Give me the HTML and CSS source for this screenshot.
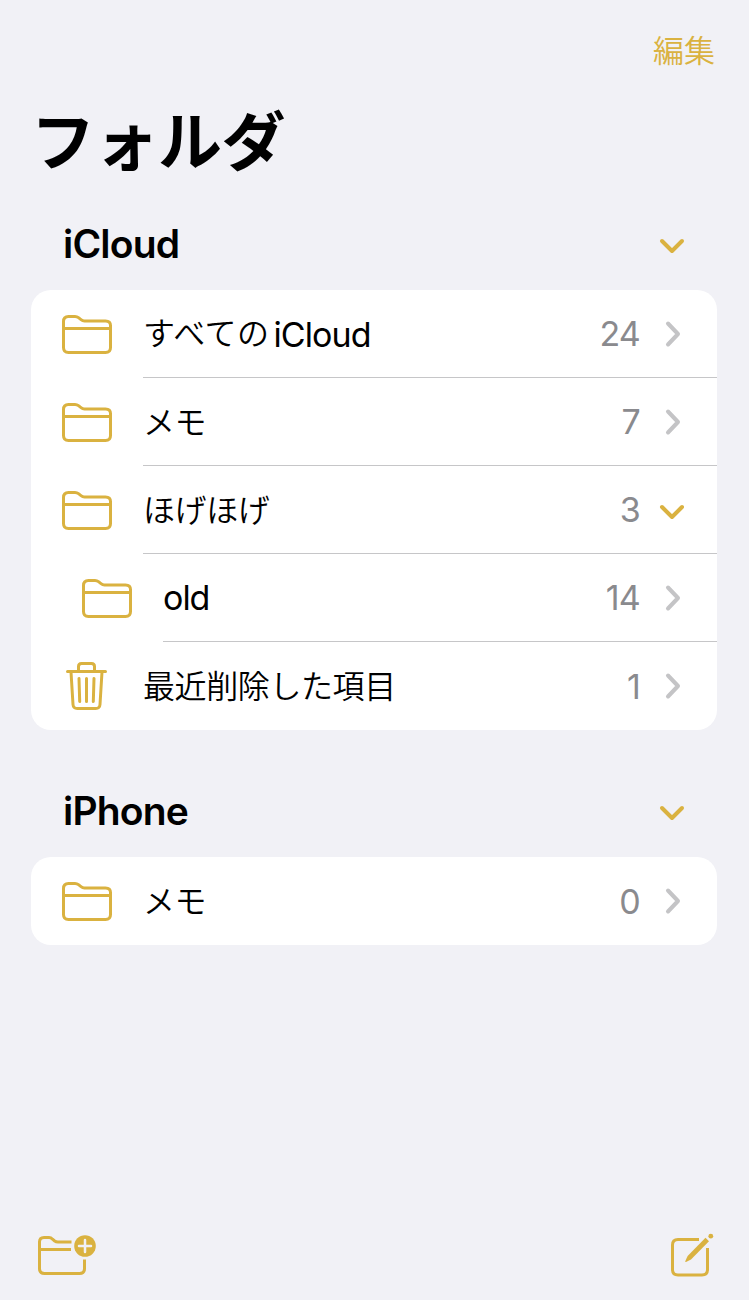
FILE: index.html
```html
<!DOCTYPE html>
<html lang="ja">
<head>
    <meta charset="UTF-8">
    <title>フォルダ</title>
    <link rel="stylesheet" href="styles.css">
</head>
<body>
    <svg class="defs" width="0" height="0">
        <symbol id="folder" viewBox="0 0 52 42">
            <path d="M2.5 34.5V8.5Q2.5 3.5 7.5 3.5H14Q16 3.5 17.5 4.7L20 6.7Q21.5 7.9 23.5 7.9H44.5Q49.5 7.9 49.5 12.4V34.5Q49.5 39.5 44.5 39.5H7.5Q2.5 39.5 2.5 34.5ZM2.5 15.5H49.5"/>
        </symbol>
        <symbol id="trash" viewBox="0 0 44 50">
            <path d="M2.5 10.5H40.5M13.5 10V5.5Q13.5 2.5 16.5 2.5H26.5Q29.5 2.5 29.5 5.5V10M6 11L8 43.5Q8.3 47.5 12.3 47.5H30.7Q34.7 47.5 35 43.5L37 11M14 17.5L14.7 40.5M21.5 17.5V40.5M29 17.5L28.3 40.5"/>
        </symbol>
        <symbol id="right" viewBox="0 0 18 28">
            <path d="M3 3.5L13 14L3 24.5"/>
        </symbol>
        <symbol id="down" viewBox="0 0 28 18">
            <path d="M4 5L14 15L24 5"/>
        </symbol>
    </svg>

    <div class="nav">
        <a class="edit">編集</a>
    </div>
    <h1>フォルダ</h1>

    <div class="section-title">
        <h2>iCloud</h2>
        <svg class="down"><use href="#down"/></svg>
    </div>
    <div class="list">
        <div class="row">
            <svg class="folder"><use href="#folder"/></svg>
            <div class="content">
                <span class="name all">すべての<span class="latin cloud">iCloud</span></span>
                <span class="count">24</span>
                <svg class="right"><use href="#right"/></svg>
            </div>
        </div>
        <div class="row">
            <svg class="folder"><use href="#folder"/></svg>
            <div class="content">
                <span class="name">メモ</span>
                <span class="count">7</span>
                <svg class="right"><use href="#right"/></svg>
            </div>
        </div>
        <div class="row">
            <svg class="folder"><use href="#folder"/></svg>
            <div class="content">
                <span class="name">ほげほげ</span>
                <span class="count">3</span>
                <svg class="down"><use href="#down"/></svg>
            </div>
        </div>
        <div class="row child">
            <svg class="folder"><use href="#folder"/></svg>
            <div class="content">
                <span class="name latin">old</span>
                <span class="count">14</span>
                <svg class="right"><use href="#right"/></svg>
            </div>
        </div>
        <div class="row">
            <svg class="trash"><use href="#trash"/></svg>
            <div class="content">
                <span class="name">最近削除した項目</span>
                <span class="count">1</span>
                <svg class="right"><use href="#right"/></svg>
            </div>
        </div>
    </div>

    <div class="section-title">
        <h2>iPhone</h2>
        <svg class="down"><use href="#down"/></svg>
    </div>
    <div class="list">
        <div class="row">
            <svg class="folder"><use href="#folder"/></svg>
            <div class="content">
                <span class="name">メモ</span>
                <span class="count">0</span>
                <svg class="right"><use href="#right"/></svg>
            </div>
        </div>
    </div>

    <div class="toolbar">
        <svg class="new-folder" viewBox="0 0 62 44">
            <path class="butt" d="M35.5 9H22Q20 9 18.7 8L16.5 6.2Q15 4.5 13 4.5H8Q3.500 4.500 3.500 9V35.500Q3.500 40.500 8.500 40.500H43.500Q48.500 40.500 48.500 35.500V26.500M3.500 16.500H35"/>
            <circle cx="49" cy="13" r="10.8"/>
            <path class="plus" d="M49 7V19M43 13H55"/>
        </svg>
        <svg class="compose" viewBox="0 0 46 46">
            <path class="butt" d="M30 6.500H9Q3.500 6.500 3.500 12V36.500Q3.500 42 9 42H33Q38.500 42 38.500 36.500V15"/>
            <path class="fill" d="M36.500 4.700L40 8.200L22 26.600L17 29Q16 29.300 16.300 28.300L18.600 23Z"/>
            <circle cx="41.800" cy="3.200" r="2.400"/>
        </svg>
    </div>
</body>
</html>
```
FILE: styles.css
```css
* {
    box-sizing: border-box;
}
body {
    background: #f1f1f6;
    font-family: 'Inter', 'Noto Sans CJK JP', sans-serif;
    display: flex;
    flex-direction: column;
    height: 1300px;
    margin: 0;
    padding: 0 32px 0 31px;
    color: #000;
    overflow: hidden;
}
svg {
    display: block;
    flex: none;
    fill: none;
    stroke: #dab240;
    stroke-width: 3;
    stroke-linecap: round;
    stroke-linejoin: round;
}
.defs {
    position: absolute;
}
.nav {
    display: flex;
    justify-content: flex-end;
    height: 95px;
    padding: 26px 2px 0 0;
}
.edit {
    color: #dab240;
    font-family: 'Noto Sans CJK JP', sans-serif;
    font-weight: 350;
    font-size: 31px;
    line-height: 46px;
}
h1 {
    height: 102px;
    margin: 0;
    font-family: 'Noto Sans CJK JP', sans-serif;
    font-size: 64px;
    font-weight: 700;
    line-height: 84px;
    letter-spacing: -0.5px;
}
.section-title {
    display: flex;
    align-items: center;
    justify-content: space-between;
    height: 93px;
    padding: 0 31px 0 32px;
}
h2 {
    margin: 0;
    font-size: 39px;
    font-weight: 600;
    letter-spacing: -0.8px;
}
.section-title .down {
    margin-top: 3px;
}
.list {
    background: #fff;
    border-radius: 20px;
    overflow: hidden;
}
.list + .section-title {
    margin-top: 34px;
}
.row {
    display: flex;
    align-items: center;
    height: 88px;
    padding-left: 30px;
}
.child {
    padding-left: 50px;
}
.folder {
    width: 52px;
    height: 42px;
    margin-right: 30px;
}
.trash {
    width: 44px;
    height: 50px;
    margin: 0 34px 0 4px;
}
.content {
    flex: 1;
    display: flex;
    align-items: center;
    height: 88px;
    padding-right: 34px;
    border-bottom: 1px solid #c6c6c8;
}
.row:last-child .content {
    border-bottom: none;
}
.name {
    flex: 1;
    padding-bottom: 4px;
    font-family: 'Noto Sans CJK JP', sans-serif;
    font-size: 32px;
    font-weight: 350;
    letter-spacing: -0.4px;
    line-height: 48px;
}
.all {
    letter-spacing: 0.5px;
}
.latin {
    padding-bottom: 0;
    font-family: 'Inter', sans-serif;
    font-size: 34px;
    font-weight: 400;
    letter-spacing: -1px;
}
.cloud {
    position: relative;
    top: 2px;
    margin-left: 4px;
    letter-spacing: -0.9px;
}
.count {
    color: #8a8a8e;
    font-size: 34px;
    letter-spacing: -0.8px;
}
.right {
    width: 18px;
    height: 28px;
    margin-left: 25px;
    stroke: #c4c4c6;
    stroke-width: 4;
}
.down {
    width: 28px;
    height: 18px;
    stroke-width: 4;
}
.content .down {
    margin: 2px -3px 0 18px;
}
.toolbar {
    display: flex;
    justify-content: space-between;
    margin-top: auto;
    padding: 0 2px 21px 5px;
}
.new-folder {
    width: 62px;
    height: 44px;
}
.compose {
    width: 46px;
    height: 46px;
}
.toolbar circle,
.fill {
    fill: #dab240;
    stroke: none;
}
.butt {
    stroke-linecap: butt;
}
.plus {
    stroke: #f1f1f6;
    stroke-width: 2.5;
}
```
